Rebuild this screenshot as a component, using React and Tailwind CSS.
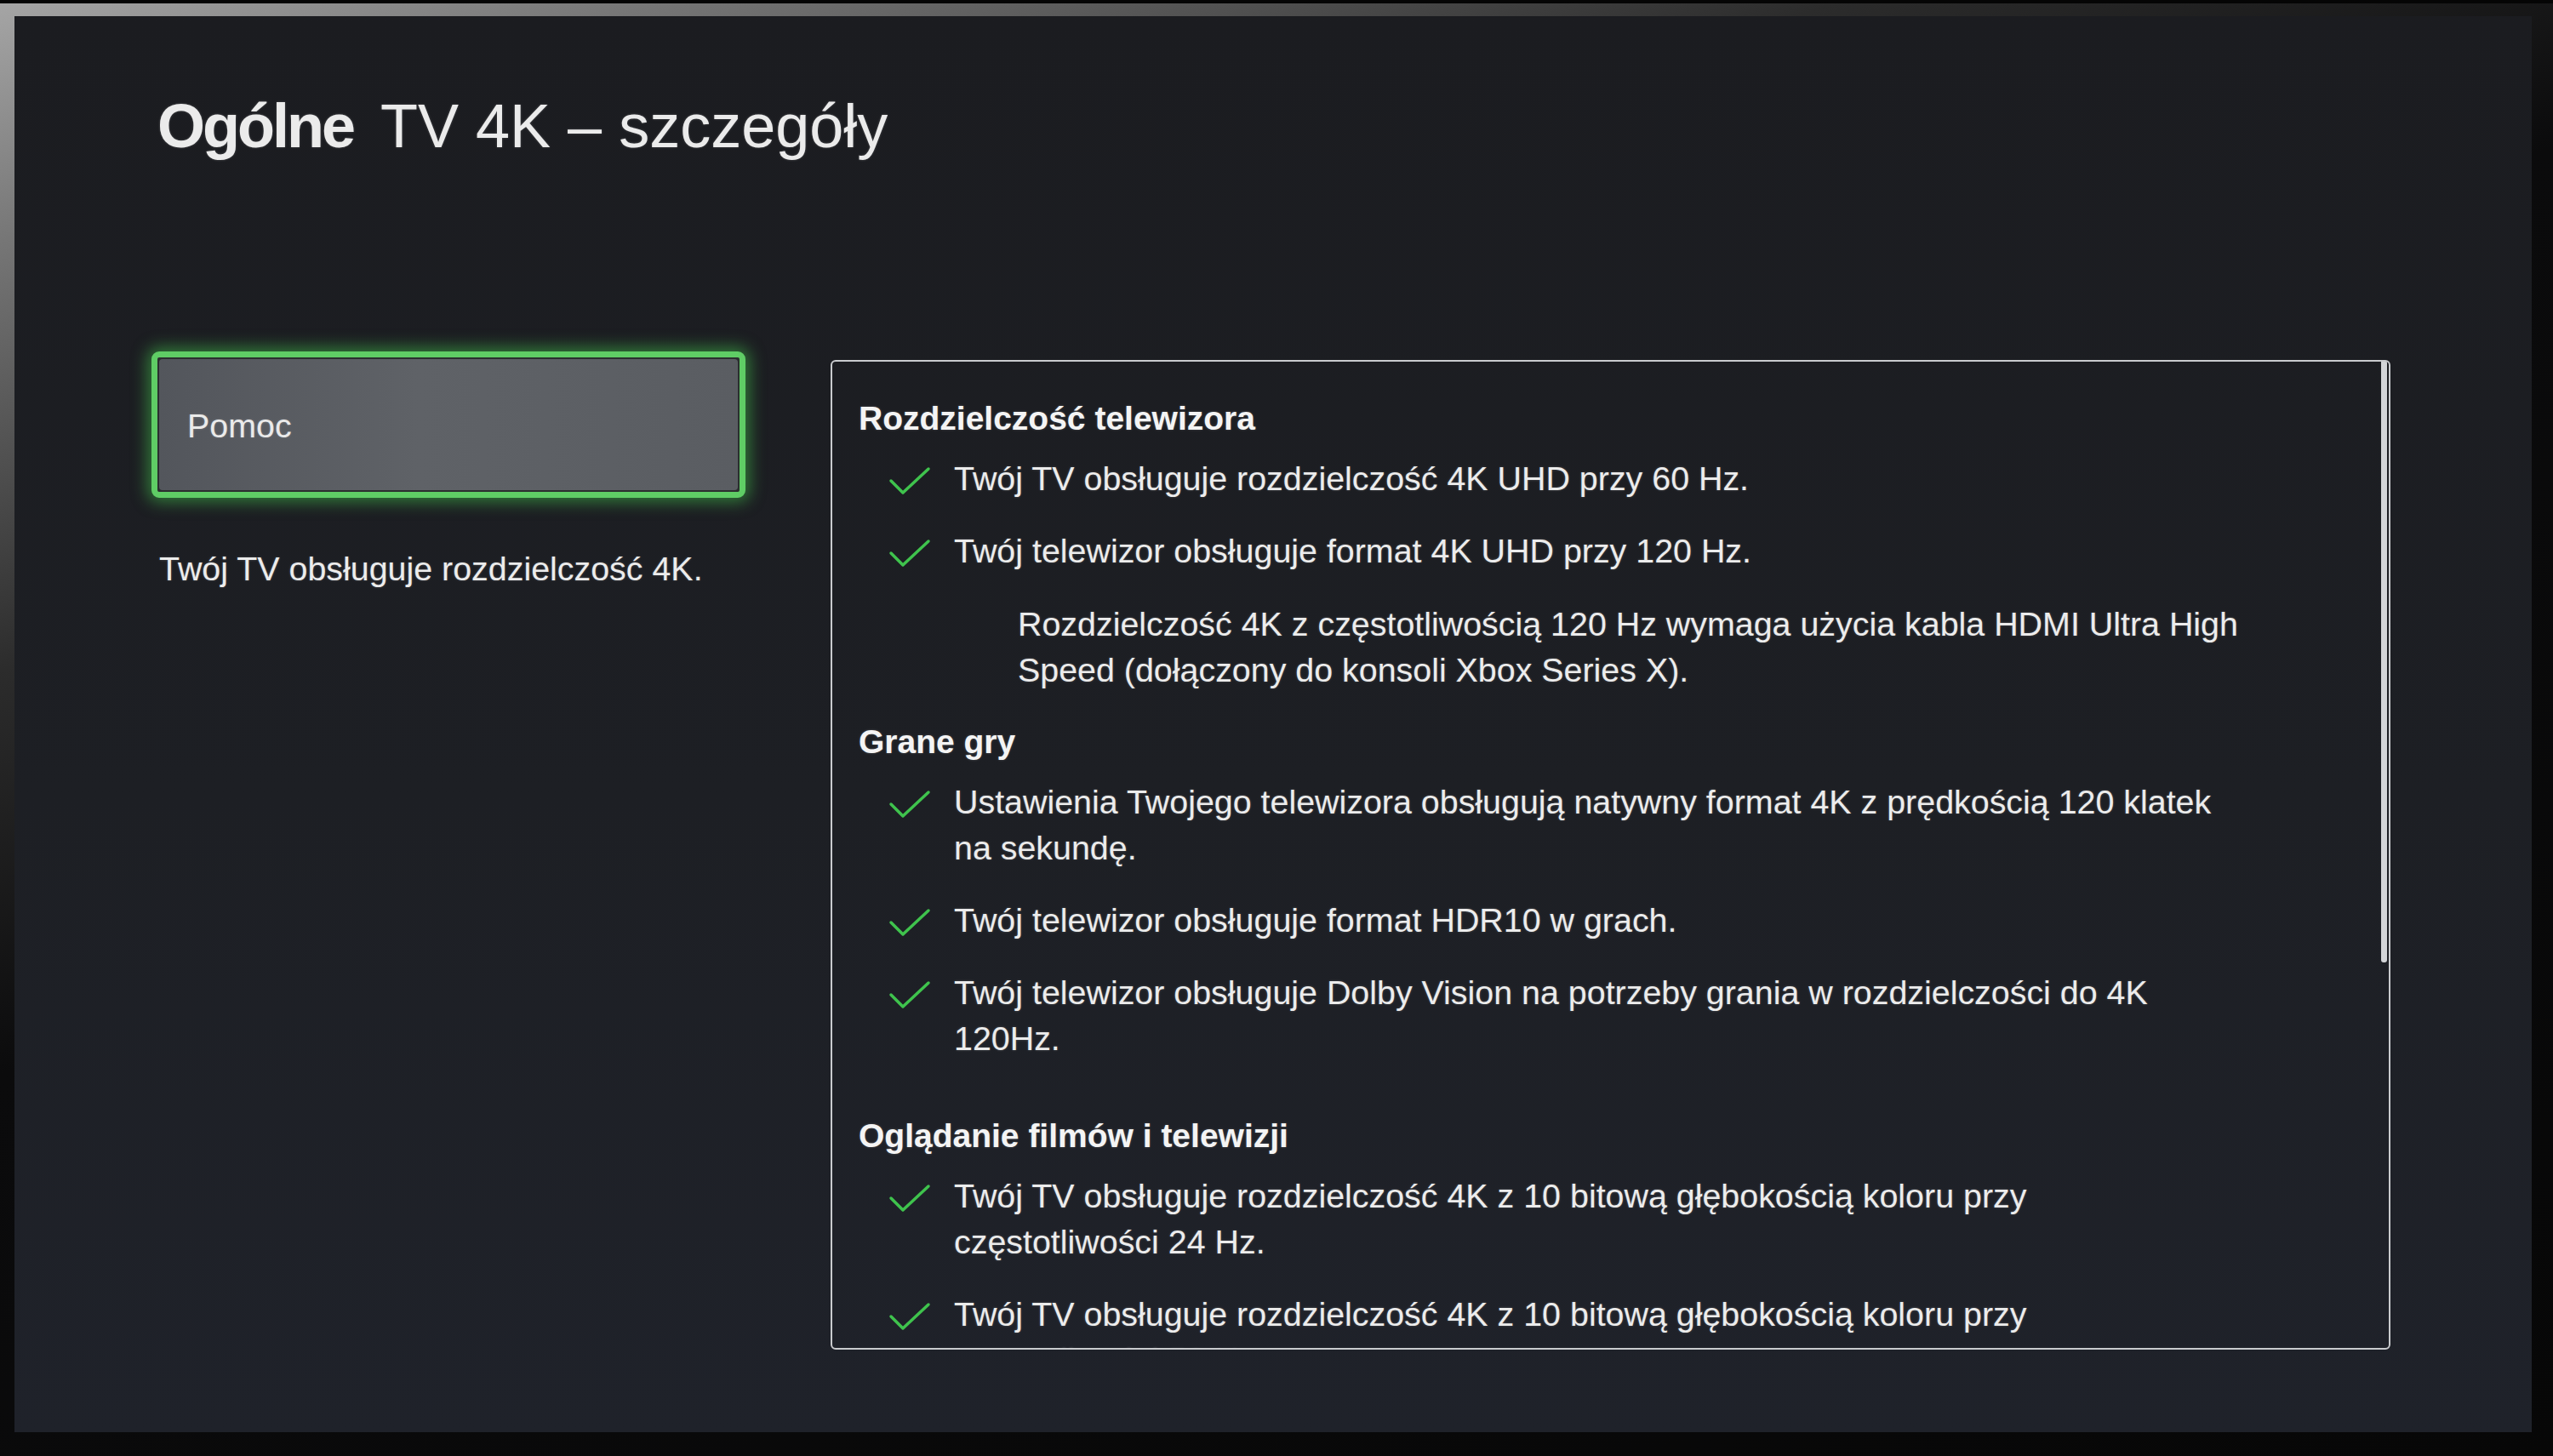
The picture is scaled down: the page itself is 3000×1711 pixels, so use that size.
import React from "react";

const font = "font-['Liberation_Sans',Arial,sans-serif]";
const glow = "[text-shadow:0_0_3px_rgba(255,255,255,0.22)]";

function Check() {
  return (
    <svg viewBox="0 0 50 34" className="w-[50px] h-[34px] shrink-0 mt-[13px]" fill="none">
      <path d="M3 17 L17 31 L47 3" stroke="#3fc34d" strokeWidth="3.5" strokeLinecap="round" strokeLinejoin="round" />
    </svg>
  );
}

function Item({ lines, first }) {
  return (
    <div className={first ? "flex ml-[35px] mt-[16px]" : "flex ml-[35px] mt-[31px]"}>
      <Check />
      <p className="ml-[27px] whitespace-nowrap">
        {lines.map((l) => (
          <span key={l} className="block">{l}</span>
        ))}
      </p>
    </div>
  );
}

function Heading({ children, className }) {
  return <h3 className={`font-bold text-[39px] leading-[54px] text-[#f4f4f4] ${className}`}>{children}</h3>;
}

export default function App() {
  return (
    <div className={`w-[3000px] h-[1711px] border-t-4 border-[#050505] bg-[linear-gradient(160deg,#a5a5a5_0%,#767676_10%,#2c2c2c_28%,#0b0b0c_45%,#070707_100%)] pt-[15px] pl-[17px] pr-[25px] pb-[28px] overflow-hidden ${font}`}>
      <div className="w-full h-full bg-[linear-gradient(180deg,#1b1c20_0%,#1d1f24_55%,#1f222a_100%)] pt-[93px] pl-[161px] text-[#ececec] overflow-hidden">
        <h1 className={`ml-[7px] text-[72px] leading-[72px] text-[#ebebeb] whitespace-nowrap ${glow}`}>
          <span className="font-bold tracking-[-3px]">Ogólne</span>
          <span className="ml-[32px]">TV 4K – szczegóły</span>
        </h1>

        <div className="flex items-start mt-[229px]">
          <div className="w-[698px] shrink-0">
            <div className="h-[172px] rounded-[9px] border-[7px] border-[#5fcd65] shadow-[0_0_18px_5px_rgba(70,210,80,0.5)] p-[2px] bg-[#2b2f2f]">
              <div className="h-full rounded-[4px] bg-[linear-gradient(90deg,#53565c_0%,#5f6267_45%,#5a5d62_100%)] flex items-center pl-[33px] pt-[4px]">
                <span className={`text-[39.4px] text-[#eaeaea] ${glow}`}>Pomoc</span>
              </div>
            </div>
            <p className={`mt-[56px] ml-[9px] text-[39.4px] leading-[54px] whitespace-nowrap ${glow}`}>
              Twój TV obsługuje rozdzielczość 4K.
            </p>
          </div>

          <div className={`relative ml-[100px] mt-[10px] w-[1833px] h-[1163px] shrink-0 border-2 border-[#c9cbce] rounded-[6px] overflow-hidden pl-[31px] pt-[40px] text-[39.4px] leading-[54px] ${glow}`}>
            <div className="absolute top-0 right-[2px] w-[7px] h-[706px] rounded-b-[3px] bg-[#d3d5d8]" />

            <Heading>Rozdzielczość telewizora</Heading>
            <Item first lines={["Twój TV obsługuje rozdzielczość 4K UHD przy 60 Hz."]} />
            <Item lines={["Twój telewizor obsługuje format 4K UHD przy 120 Hz."]} />
            <p className="ml-[187px] mt-[32px] whitespace-nowrap">
              <span className="block">Rozdzielczość 4K z częstotliwością 120 Hz wymaga użycia kabla HDMI Ultra High</span>
              <span className="block">Speed (dołączony do konsoli Xbox Series X).</span>
            </p>

            <Heading className="mt-[31px]">Grane gry</Heading>
            <Item
              first
              lines={[
                "Ustawienia Twojego telewizora obsługują natywny format 4K z prędkością 120 klatek",
                "na sekundę.",
              ]}
            />
            <Item lines={["Twój telewizor obsługuje format HDR10 w grach."]} />
            <Item
              lines={[
                "Twój telewizor obsługuje Dolby Vision na potrzeby grania w rozdzielczości do 4K",
                "120Hz.",
              ]}
            />

            <Heading className="mt-[61px]">Oglądanie filmów i telewizji</Heading>
            <Item
              first
              lines={[
                "Twój TV obsługuje rozdzielczość 4K z 10 bitową głębokością koloru przy",
                "częstotliwości 24 Hz.",
              ]}
            />
            <Item
              lines={[
                "Twój TV obsługuje rozdzielczość 4K z 10 bitową głębokością koloru przy",
                "częstotliwości 50 Hz.",
              ]}
            />
          </div>
        </div>
      </div>
    </div>
  );
}
